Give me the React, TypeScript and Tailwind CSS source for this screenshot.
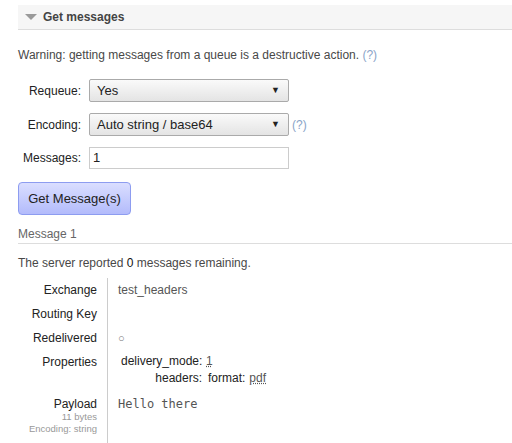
import React from "react";

const font = "font-['Liberation_Sans',Arial,sans-serif]";

function Select({ value }: { value: string }) {
  return (
    <div className="w-[200px] h-[23px] border border-[#aaa] rounded-[2px] bg-gradient-to-b from-[#fafafa] to-[#e4e4e4] flex items-center justify-between pl-[7px] pr-[8px] text-[13px] text-[#222]">
      <span>{value}</span>
      <span className="text-[9px] text-[#222]">▼</span>
    </div>
  );
}

function Row({ label, children, sub }: { label: string; children?: React.ReactNode; sub?: React.ReactNode }) {
  return (
    <div className="flex">
      <div className="w-[89px] shrink-0 text-right pr-[10px] py-[3px] text-[12px] leading-[18px] text-[#222]">
        <div>{label}</div>
        {sub}
      </div>
      <div className="border-l border-[#ccc] pl-[10px] py-[3px] text-[12px] leading-[18px] text-[#555] min-h-[24px] flex-1">
        {children}
      </div>
    </div>
  );
}

export default function App() {
  return (
    <div className={`${font} bg-white w-[512px] h-[443px] overflow-hidden pt-[5px] pl-[18px]`}>
      {/* section header */}
      <div className="h-[25px] bg-[#f6f6f6] border-b border-[#ddd] flex items-center">
        <svg width="12" height="7" viewBox="0 0 12 7" className="ml-[7px] mr-[6px]">
          <polygon points="0,0 12,0 6,6" fill="#9a9a9a" />
        </svg>
        <span className="font-bold text-[12px] text-[#444]">Get messages</span>
      </div>

      <p className="mt-[16px] text-[12px] text-[#484848]">
        Warning: getting messages from a queue is a destructive action. <span className="text-[#8aa4c8]">(?)</span>
      </p>

      <div className="mt-[15px] flex flex-col gap-[11px]">
        <div className="flex items-center">
          <label className="w-[71px] text-right pr-[8px] text-[12px] text-[#222]">Requeue:</label>
          <Select value="Yes" />
        </div>
        <div className="flex items-center">
          <label className="w-[71px] text-right pr-[8px] text-[12px] text-[#222]">Encoding:</label>
          <Select value="Auto string / base64" />
          <span className="ml-[3px] text-[12px] text-[#8aa4c8]">(?)</span>
        </div>
        <div className="flex items-center">
          <label className="w-[71px] text-right pr-[8px] text-[12px] text-[#222]">Messages:</label>
          <div className="w-[200px] h-[22px] border border-[#ccc] flex items-center px-[3px] text-[13px] text-[#222]">1</div>
        </div>
      </div>

      <button className="mt-[13px] w-[113px] h-[33px] rounded-[4px] border border-[#8d9cf0] bg-gradient-to-b from-[#dadeff] to-[#b3bbfb] text-[13px] text-[#222]">
        Get Message(s)
      </button>

      <div className="mt-[12px] text-[12px] leading-[14px] text-[#666] pb-[2px] border-b border-[#ddd]">Message 1</div>

      <p className="mt-[10px] text-[12px] leading-[18px] text-[#484848]">
        The server reported <span className="text-[#111]">0</span> messages remaining.
      </p>

      <div className="mt-[6px] flex flex-col">
        <Row label="Exchange">test_headers</Row>
        <Row label="Routing Key"></Row>
        <Row label="Redelivered">
          <span className="text-[11px] text-[#777]">○</span>
        </Row>
        <Row label="Properties">
          <div className="pl-[3px] text-[#222] leading-[17px] pb-[2px]">
            <div className="flex">
              <span className="w-[81px] text-right">delivery_mode:</span>
              <span className="ml-[4px] underline decoration-dotted text-[#555]">1</span>
            </div>
            <div className="flex">
              <span className="w-[81px] text-right">headers:</span>
              <span className="ml-[6px]">format:</span>
              <span className="ml-[4px] underline decoration-dotted text-[#555]">pdf</span>
            </div>
          </div>
        </Row>
        <Row
          label="Payload"
          sub={
            <div className="-mt-[2px] text-[9.5px] text-[#999] leading-[12px]">
              <div>11 bytes</div>
              <div>Encoding: string</div>
            </div>
          }
        >
          <div className="font-['DejaVu_Sans_Mono',monospace] text-[12px] text-[#555] h-[60px]">Hello there</div>
        </Row>
      </div>
    </div>
  );
}
